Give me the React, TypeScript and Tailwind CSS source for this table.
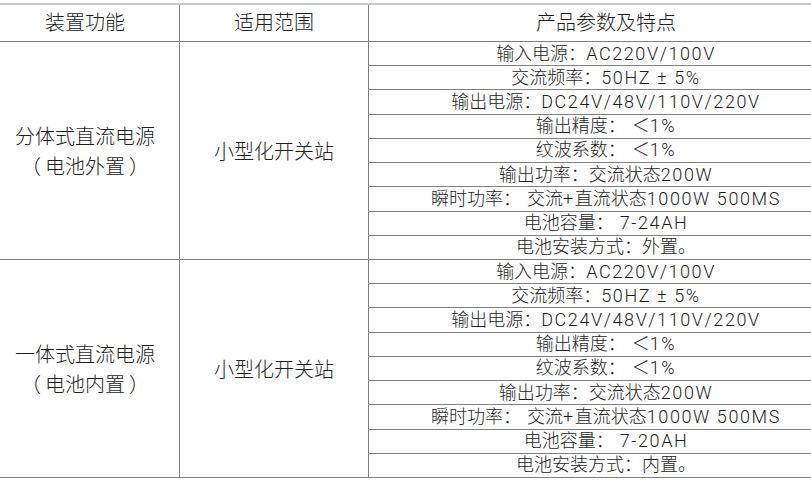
const groups = [
  {
    name: '分体式直流电源',
    note: '（\u2009电池外置\u2009）',
    scope: '小型化开关站',
    specs: [
      '输入电源：AC220V/100V',
      '交流频率：50HZ ± 5%',
      '输出电源：DC24V/48V/110V/220V',
      '输出精度： ＜1%',
      '纹波系数： ＜1%',
      '输出功率：交流状态200W',
      '瞬时功率： 交流+直流状态1000W 500MS',
      '电池容量： 7-24AH',
      '电池安装方式：外置。',
    ],
  },
  {
    name: '一体式直流电源',
    note: '（\u2009电池内置\u2009）',
    scope: '小型化开关站',
    specs: [
      '输入电源：AC220V/100V',
      '交流频率：50HZ ± 5%',
      '输出电源：DC24V/48V/110V/220V',
      '输出精度： ＜1%',
      '纹波系数： ＜1%',
      '输出功率：交流状态200W',
      '瞬时功率： 交流+直流状态1000W 500MS',
      '电池容量： 7-20AH',
      '电池安装方式：内置。',
    ],
  },
];

// latin runs are set wider than the cjk ones in the source sheet
function Spec({ text }: { text: string }) {
  const parts = text.split(/([\u3000-\u9fff\uff00-\uffef]+)/).filter(Boolean);
  return (
    <span>
      {parts.map((part, index) =>
        /[\u3000-\u9fff\uff00-\uffef]/.test(part) ? (
          <span key={index}>{part}</span>
        ) : (
          <span key={index} className="tracking-[1.6px]">
            {part}
          </span>
        ),
      )}
    </span>
  );
}

export default function App() {
  return (
    <div
      className="h-[481px] w-[811px] overflow-hidden bg-white pt-[3px] font-light text-[#1e1e1e]"
      style={{ fontFamily: 'Roboto, "Noto Sans CJK SC", sans-serif' }}
    >
      <div className="-ml-[9px] w-[852px]">
        <div className="flex h-[39px] border-t-2 border-b border-t-[#c8c8c8] border-b-[#808080] text-[20px]">
          <div className="flex w-[189px] items-center justify-center border-r border-[#808080]">装置功能</div>
          <div className="flex w-[189px] items-center justify-center border-r border-[#808080]">适用范围</div>
          <div className="flex w-[474px] items-center justify-center">产品参数及特点</div>
        </div>
        {groups.map((group, index) => (
          <div key={index} className="flex h-[218px] border-b border-[#808080]">
            <div className="flex w-[189px] flex-col items-center justify-center border-r border-[#808080] pt-[2px] text-[20px] leading-[30px]">
              <div>{group.name}</div>
              <div className="whitespace-pre">{group.note}</div>
            </div>
            <div className="flex w-[189px] items-center justify-center border-r border-[#808080] pt-[2px] text-[20px]">
              {group.scope}
            </div>
            <div className="flex w-[474px] flex-col text-[18px]">
              {group.specs.map((spec, row) => (
                <div
                  key={row}
                  className={
                    row < group.specs.length - 1
                      ? 'flex flex-1 items-center justify-center whitespace-pre border-b border-[#808080] leading-none'
                      : 'flex flex-1 items-center justify-center whitespace-pre leading-none'
                  }
                >
                  <Spec text={spec} />
                </div>
              ))}
            </div>
          </div>
        ))}
      </div>
    </div>
  );
}
